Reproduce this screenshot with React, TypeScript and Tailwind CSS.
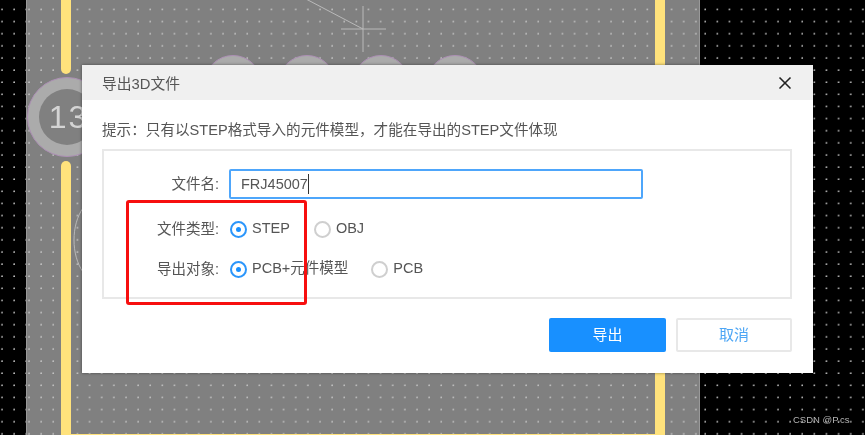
import React from 'react';
import { X } from 'lucide-react';

const dots =
  'bg-[radial-gradient(circle_at_2px_9.5px,#c4c4c4_0,#c4c4c4_0.5px,transparent_1.1px)] bg-[length:12.14px_12.14px]';

function Radio({ label, checked, className }: { label: string; checked?: boolean; className?: string }) {
  return (
    <label className={`flex items-center gap-[5px] ${className ?? ''}`}>
      <span
        className={`flex h-[17px] w-[17px] items-center justify-center rounded-full border-2 ${
          checked ? 'border-[#2b96fb]' : 'border-[#cfcfcf]'
        }`}
      >
        {checked && <span className="h-[5px] w-[5px] rounded-full bg-[#1890ff]" />}
      </span>
      <span>{label}</span>
    </label>
  );
}

function Pad({ className }: { className: string }) {
  return <div className={`absolute h-[58px] w-[58px] rounded-full border border-[#ad8fb5] bg-[#ababab] ${className}`} />;
}

export default function App() {
  return (
    <div
      className="relative h-[435px] w-[865px] overflow-hidden bg-black text-[14.5px] text-[#555] blur-[0.35px]"
      style={{ fontFamily: '"Liberation Sans", "Noto Sans CJK SC", sans-serif' }}
    >
      {/* PCB canvas */}
      <div className={`absolute inset-0 ${dots}`} />
      <div className={`absolute bottom-0 left-[26px] top-0 w-[674px] border-x border-[#999] bg-[#808080] ${dots}`}>
        <div className="absolute left-[34px] top-[-20px] h-[94px] w-[10px] rounded-full bg-[#ffe27c]" />
        <div className="absolute bottom-[-20px] left-[34px] top-[161px] w-[10px] rounded-t-full bg-[#ffe27c]" />
        <div className="absolute bottom-0 left-[628px] top-0 w-[10px] bg-[#ffe27c]" />
        <div className="absolute bottom-0 left-[44px] h-px w-[584px] bg-[#ffe27c]" />

        <Pad className="left-[177px] top-[55px]" />
        <Pad className="left-[251px] top-[55px]" />
        <Pad className="left-[325px] top-[55px]" />
        <Pad className="left-[399px] top-[55px]" />

        <div className="absolute left-[0px] top-[77px] flex h-[80px] w-[80px] items-center justify-center rounded-full border border-[#ad8fb5] bg-[#ababab]">
          <div className="flex h-[56px] w-[56px] items-center justify-center rounded-full bg-[#808080] pl-[3px] text-[32px] tracking-[2px] text-[#d4d4d4]">
            13
          </div>
        </div>

        <svg className="absolute left-0 top-0" width="674" height="435" fill="none" stroke="#b9b9b9">
          <path d="M279 -1L336 29M314 29H359M336 6V52" />
          <path d="M56 272C44 255 44 225 56 208" />
        </svg>
      </div>

      {/* Dialog */}
      <div className="absolute left-[82px] top-[65px] flex h-[308px] w-[731px] flex-col bg-white shadow-[0_0_3px_rgba(0,0,0,0.45)]">
        <div className="flex h-[35px] items-center justify-between bg-[#f0f0f0] pl-[20px] pr-[18px] text-[14.8px] text-[#555]">
          <span className="pt-[3px]">导出3D文件</span>
          <X size={20} strokeWidth={2} className="text-[#222]" />
        </div>

        <div className="flex flex-1 flex-col pl-[20px] pr-[21px]">
          <p className="mt-[20px] h-[29px] text-[14.6px] leading-[20px] text-[#555]">
            提示：只有以STEP格式导入的元件模型，才能在导出的STEP文件体现
          </p>

          <div className="flex h-[150px] flex-col border-2 border-[#e8e8e8] pt-[18px]">
            <div className="flex h-[30px] items-center">
              <span className="w-[115px] pt-[2px] text-right">文件名:</span>
              <div className="ml-[10px] flex h-[30px] w-[414px] items-center rounded-[2px] border-2 border-[#4ea6fb] pl-[10px] text-[#555]">
                <span className="pt-[2px]">FRJ45007</span>
                <span className="h-[20px] w-px bg-[#333]" />
              </div>
            </div>

            <div className="mt-[15px] flex h-[30px] items-center">
              <span className="w-[115px] pt-[2px] text-right">文件类型:</span>
              <Radio label="STEP" checked className="ml-[11px]" />
              <Radio label="OBJ" className="ml-[24px]" />
            </div>

            <div className="mt-[10px] flex h-[30px] items-center">
              <span className="w-[115px] pt-[2px] text-right">导出对象:</span>
              <Radio label="PCB+元件模型" checked className="ml-[11px]" />
              <Radio label="PCB" className="ml-[23px]" />
            </div>
          </div>

          <div className="mt-[19px] flex justify-end gap-[10px]">
            <button className="h-[34px] w-[117px] rounded-[2px] bg-[#1890ff] text-[15px] text-white">导出</button>
            <button className="h-[34px] w-[116px] rounded-[2px] border-2 border-[#e8e8e8] bg-white text-[15px] text-[#4da6f5]">
              取消
            </button>
          </div>
        </div>
      </div>

      {/* Annotation */}
      <div className="absolute left-[126px] top-[200px] h-[105px] w-[181px] rounded-[3px] border-[3px] border-[#f70f0f]" />

      <span className="absolute left-[793px] top-[413px] text-[9.5px] leading-[14px] text-[#b5b5b5]">CSDN @P.cs</span>
    </div>
  );
}
